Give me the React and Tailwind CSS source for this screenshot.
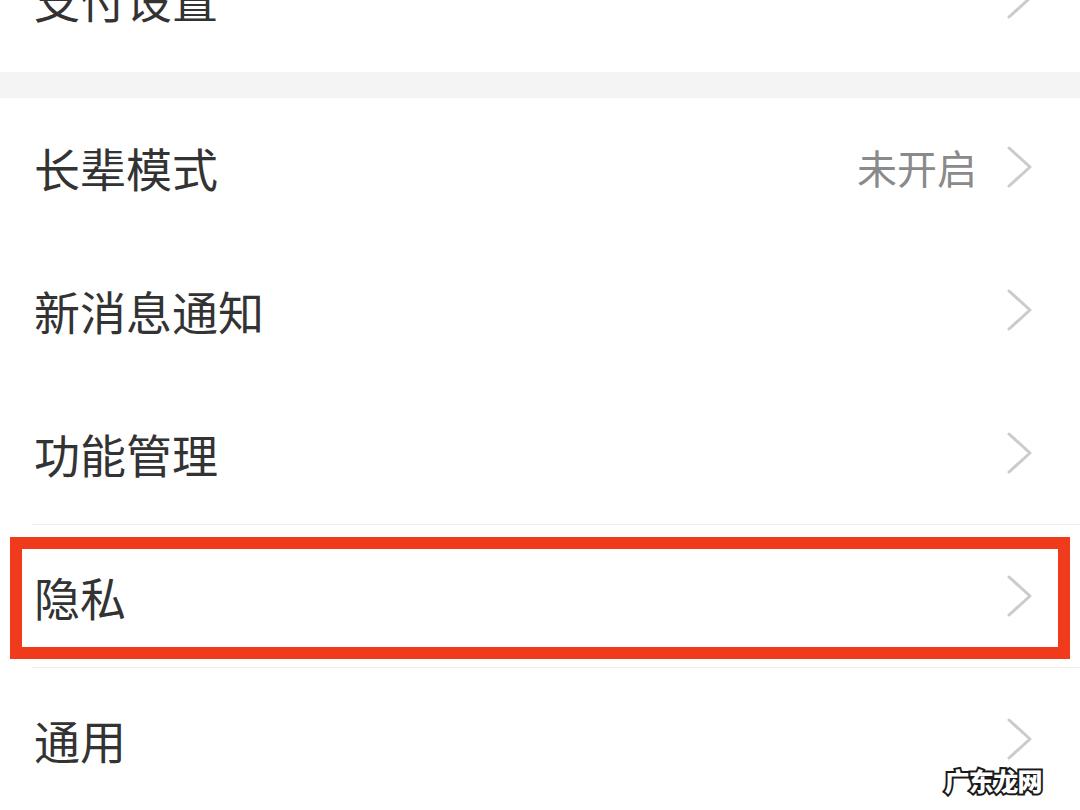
import React from "react";

const FONT = { fontFamily: '"Noto Sans CJK SC", "Noto Sans", sans-serif' };

function Chevron() {
  return (
    <svg width="26" height="42" viewBox="0 0 26 42" fill="none" aria-hidden="true" className="shrink-0">
      <path d="M2 2l21 19L2 40" stroke="#cbcbcb" strokeWidth="3" strokeLinecap="round" strokeLinejoin="round" />
    </svg>
  );
}

function Row({ label, value, divider, highlight, className = "" }) {
  return (
    <div className={`relative flex h-[143px] items-center bg-white pb-[6px] pl-[34px] pr-[47px] ${className}`}>
      <span className="flex-1 text-[46px] leading-none text-[#333333]">{label}</span>
      {value && <span className="mr-[30px] text-[40px] leading-none text-[#8a8a8a]">{value}</span>}
      <Chevron />
      {divider && <div className="absolute bottom-[2px] left-[32px] right-0 h-px bg-[#eeeeee]" />}
      {highlight && (
        <div className="absolute left-[10px] right-[10px] top-[10px] bottom-[11px] border-[12px] border-[#ef3a1b]" />
      )}
    </div>
  );
}

export default function App() {
  return (
    <div className="relative h-[810px] w-[1080px] overflow-hidden bg-white" style={FONT}>
      <Row label="支付设置" className="-mt-[71px]" />
      <div className="h-[26px] bg-[#f4f4f4]" />
      <Row label="长辈模式" value="未开启" />
      <Row label="新消息通知" />
      <Row label="功能管理" divider />
      <Row label="隐私" divider highlight />
      <Row label="通用" />
      <div className="absolute bottom-[17px] right-[38px] text-[25px] font-black leading-none tracking-tight text-white [-webkit-text-stroke:4px_#1a1a1a] [paint-order:stroke_fill]">
        广东龙网
      </div>
    </div>
  );
}
